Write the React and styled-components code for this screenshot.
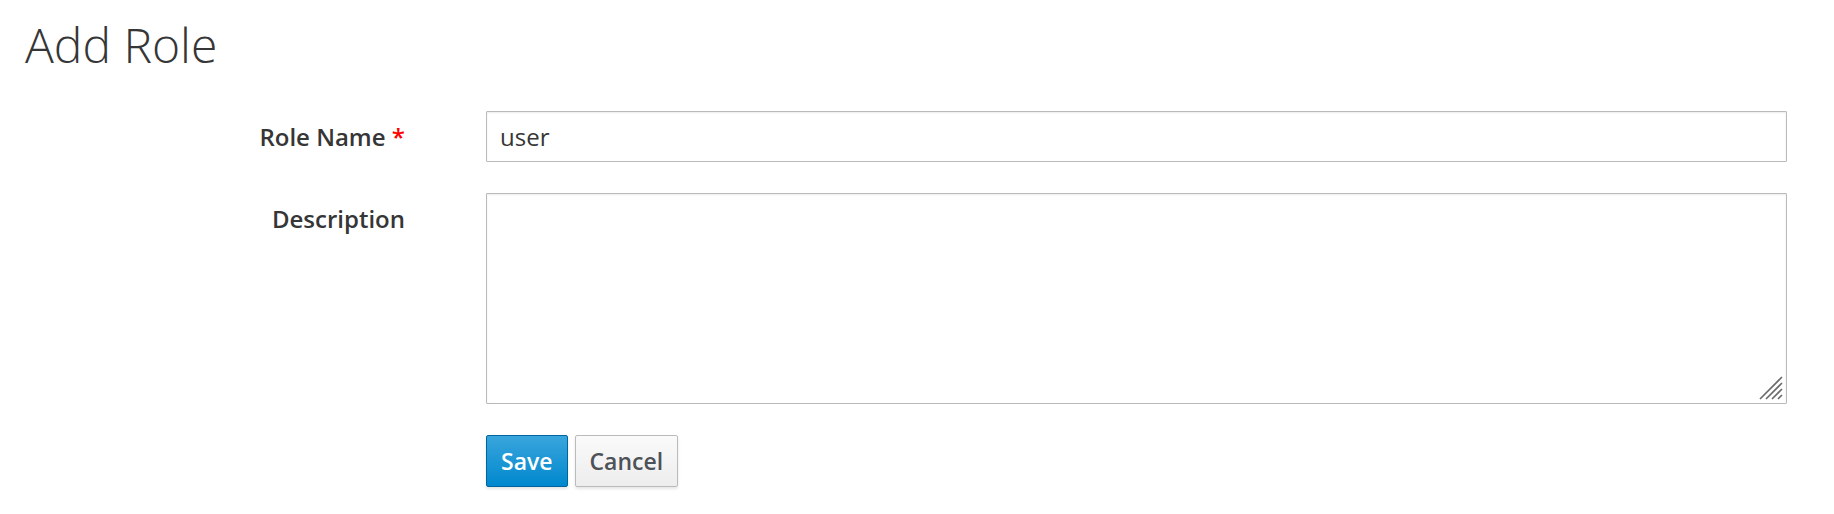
import styled, { createGlobalStyle } from "styled-components";

const GlobalStyle = createGlobalStyle`
    body {
        margin: 0;
        background: #ffffff;
        font-family: 'Open Sans', 'Noto Sans', sans-serif;
        color: #363636;
    }
    * { box-sizing: border-box; }
`;

export default function App() {
    return (
        <Page>
            <GlobalStyle />
            <Title>Add Role</Title>
            <Form onSubmit={(e) => e.preventDefault()}>
                <FormGroup>
                    <Label htmlFor="name">
                        Role Name <Required>*</Required>
                    </Label>
                    <TextInput id="name" type="text" defaultValue="user" />
                </FormGroup>
                <FormGroup>
                    <Label htmlFor="description">Description</Label>
                    <AreaWrap>
                        <TextArea id="description" />
                        <Grip width="24" height="24" viewBox="0 0 24 24">
                            <path d="M23 1 L1 23 M23 7 L7 23 M23 13 L13 23 M23 19 L19 23" stroke="#6a6a6a" strokeWidth="1.6" fill="none" />
                        </Grip>
                    </AreaWrap>
                </FormGroup>
                <FormGroup>
                    <span />
                    <Buttons>
                        <Button primary type="submit">Save</Button>
                        <Button type="button">Cancel</Button>
                    </Buttons>
                </FormGroup>
            </Form>
        </Page>
    );
}

const Page = styled.div`
    padding: 17px 47px 20px 24px;
`;

const Title = styled.h1`
    margin: 0 0 39px 1px;
    font-size: 48px;
    line-height: 55px;
    font-weight: 300;
    color: #363636;
`;

const Form = styled.form`
    display: flex;
    flex-direction: column;
    gap: 31px;
`;

const FormGroup = styled.div`
    display: grid;
    grid-template-columns: 381px 1fr;
    column-gap: 81px;
    align-items: start;
`;

const Label = styled.label`
    text-align: right;
    padding-top: 9px;
    font-size: 24px;
    line-height: 1.4;
    font-weight: 600;
    color: #363636;
`;

const Required = styled.span`
    color: #ff0000;
`;

const field = `
    width: 100%;
    border: 1px solid #bababa;
    border-radius: 1px;
    background: #ffffff;
    box-shadow: inset 0 1px 2px rgba(3, 3, 3, 0.075);
    font-family: 'Open Sans', 'Noto Sans', sans-serif;
    font-size: 24px;
    color: #363636;
    outline: none;
`;

const TextInput = styled.input`
    ${field}
    height: 51px;
    padding: 0 13px;
`;

const AreaWrap = styled.div`
    position: relative;
`;

const TextArea = styled.textarea`
    ${field}
    display: block;
    height: 211px;
    padding: 8px 13px;
    resize: none;
`;

const Grip = styled.svg`
    position: absolute;
    right: 4px;
    bottom: 4px;
    pointer-events: none;
`;

const Buttons = styled.div`
    display: flex;
    gap: 7px;
`;

const Button = styled.button`
    height: 52px;
    padding: 0 14px;
    border-radius: 2px;
    font-family: 'Open Sans', 'Noto Sans', sans-serif;
    font-size: 23px;
    font-weight: 600;
    cursor: pointer;
    box-shadow: 0 2px 3px rgba(3, 3, 3, 0.1);
    border: 1px solid ${(p) => (p.primary ? "#00659c" : "#bbbbbb")};
    color: ${(p) => (p.primary ? "#ffffff" : "#4d5258")};
    background: ${(p) =>
        p.primary
            ? "linear-gradient(to bottom, #39a5dc 0%, #0088ce 100%)"
            : "linear-gradient(to bottom, #fafafa 0%, #ededed 100%)"};
`;
